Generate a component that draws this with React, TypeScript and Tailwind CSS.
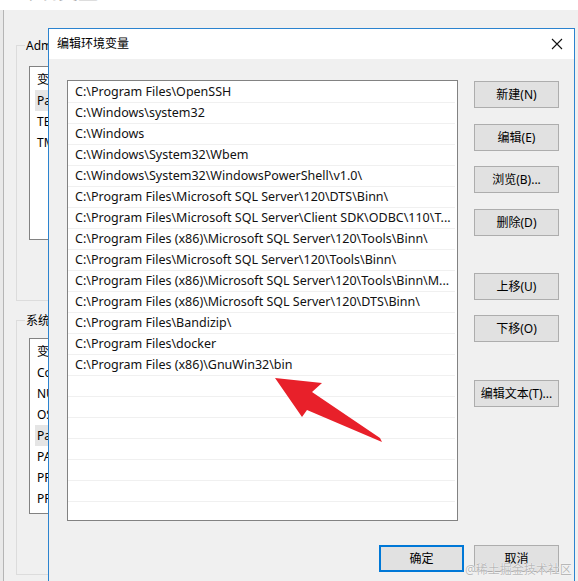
import React from 'react';

const FONT = '"Noto Sans", "Noto Sans CJK SC", sans-serif';

const paths = [
  'C:\\Program Files\\OpenSSH',
  'C:\\Windows\\system32',
  'C:\\Windows',
  'C:\\Windows\\System32\\Wbem',
  'C:\\Windows\\System32\\WindowsPowerShell\\v1.0\\',
  'C:\\Program Files\\Microsoft SQL Server\\120\\DTS\\Binn\\',
  'C:\\Program Files\\Microsoft SQL Server\\Client SDK\\ODBC\\110\\T...',
  'C:\\Program Files (x86)\\Microsoft SQL Server\\120\\Tools\\Binn\\',
  'C:\\Program Files\\Microsoft SQL Server\\120\\Tools\\Binn\\',
  'C:\\Program Files (x86)\\Microsoft SQL Server\\120\\Tools\\Binn\\M...',
  'C:\\Program Files (x86)\\Microsoft SQL Server\\120\\DTS\\Binn\\',
  'C:\\Program Files\\Bandizip\\',
  'C:\\Program Files\\docker',
  'C:\\Program Files (x86)\\GnuWin32\\bin',
];

const rows = [...paths, ...Array(8).fill('')];

function WinButton({ label, primary = false }: { label: string; primary?: boolean }) {
  return (
    <div
      className={`w-[85px] h-[27px] flex items-center justify-center bg-[#e1e1e1] text-[12px] text-black ${
        primary ? 'border-2 border-[#0078d7]' : 'border border-[#adadad]'
      }`}
    >
      {label}
    </div>
  );
}

function BgList({ items, hi }: { items: string[]; hi: number }) {
  return (
    <div className="h-full border border-[#828282] bg-white pl-[5px] pt-[2px] flex flex-col overflow-hidden">
      {items.map((t, i) => (
        <div
          key={i}
          className={`h-[21px] shrink-0 flex items-center pl-[2px] text-[12px] text-black whitespace-nowrap ${i === hi ? 'bg-[#e5e5e5]' : ''}`}
        >
          {t}
        </div>
      ))}
    </div>
  );
}

export default function App() {
  return (
    <div className="relative w-[578px] h-[581px] overflow-hidden bg-[#f0f0f0]" style={{ fontFamily: FONT }}>
      {/* background window: 环境变量 (mostly covered by the dialog) */}
      <div className="h-[10px] bg-white relative overflow-hidden">
        <div className="absolute left-[18px] top-[-23px] text-[20px] text-[#888]">环境变量</div>
      </div>
      <div className="flex w-[48px] overflow-hidden">
        <div className="w-[4px] shrink-0 h-[571px] bg-[#e9e9e9] border-r border-[#b5b5b5]" />
        <div className="shrink-0 pl-[12px] pt-[35px]">
          <div className="relative w-[300px] h-[256px] border border-[#dcdcdc] pt-[20px] pl-[12px]">
            <div className="absolute left-[8px] top-[-9px] bg-[#f0f0f0] px-[1px] text-[12px] text-black">
              Administrator 的用户变量
            </div>
            <div className="w-[260px] h-[174px]">
              <BgList items={['变量', 'Path', 'TEMP', 'TMP']} hi={1} />
            </div>
          </div>
          <div className="relative w-[300px] h-[255px] mt-[19px] border border-[#dcdcdc] pt-[17px] pl-[12px]">
            <div className="absolute left-[8px] top-[-9px] bg-[#f0f0f0] px-[1px] text-[12px] text-black">
              系统变量
            </div>
            <div className="w-[260px] h-[176px]">
              <BgList items={['变量', 'ComSpec', 'NUMBER', 'OS', 'Path', 'PATHEXT', 'PROCESSOR', 'PROCESSOR']} hi={4} />
            </div>
          </div>
        </div>
      </div>

      {/* dialog: 编辑环境变量 */}
      <div className="absolute left-[48px] top-[28px] w-[527px] h-[560px] border border-[#2b83cf] bg-[#f0f0f0] flex flex-col">
        <div className="h-[30px] bg-white flex items-center justify-between pl-[8px] pr-[11px]">
          <span className="text-[12px] text-black">编辑环境变量</span>
          <svg width="12" height="12" viewBox="0 0 12 12">
            <path d="M1 1 L11 11 M11 1 L1 11" stroke="#111" strokeWidth="1.1" />
          </svg>
        </div>
        <div className="flex flex-col pl-[18px] pr-[15px] pt-[21px]">
          <div className="flex gap-[16px]">
            <div className="w-[391px] h-[441px] border border-[#828282] bg-white overflow-hidden pt-px">
              {rows.map((t, i) => (
                <div
                  key={i}
                  className="h-[21px] border-b border-[#f0f0f0] mr-[2px] pl-[7px] flex items-center text-[12.5px] text-[#111] whitespace-nowrap overflow-hidden"
                >
                  {t}
                </div>
              ))}
            </div>
            <div className="flex flex-col pt-px">
              <WinButton label="新建(N)" />
              <div className="mt-[16px]"><WinButton label="编辑(E)" /></div>
              <div className="mt-[15px]"><WinButton label="浏览(B)..." /></div>
              <div className="mt-[16px]"><WinButton label="删除(D)" /></div>
              <div className="mt-[37px]"><WinButton label="上移(U)" /></div>
              <div className="mt-[15px]"><WinButton label="下移(O)" /></div>
              <div className="mt-[38px]"><WinButton label="编辑文本(T)..." /></div>
            </div>
          </div>
          <div className="flex justify-end gap-[10px] mt-[24px]">
            <WinButton label="确定" primary />
            <WinButton label="取消" />
          </div>
        </div>
      </div>

      {/* red arrow annotation */}
      <svg className="absolute left-[270px] top-[370px]" width="120" height="80" viewBox="0 0 120 80">
        <polygon points="5,8 52,13 42,22 110,68 112,72 37,40 32,47" fill="#e8202a" />
      </svg>

      {/* watermark */}
      <div
        className="absolute left-[465px] top-[562px] text-[12px] leading-[16px] text-[#b8b8b8] whitespace-nowrap"
        style={{ textShadow: '0 0 1px #fff, 0 0 1px #fff' }}
      >
        @稀土掘金技术社区
      </div>
    </div>
  );
}
